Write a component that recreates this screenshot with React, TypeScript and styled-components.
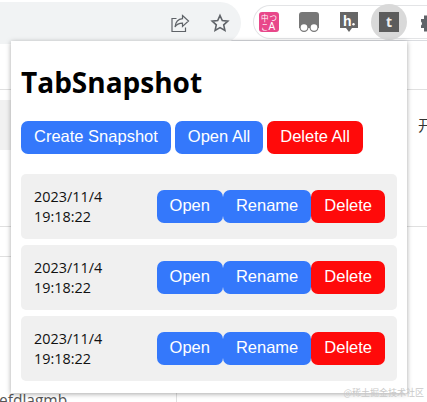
import React from 'react';
import styled, { createGlobalStyle } from 'styled-components';

const GlobalStyle = createGlobalStyle`
  html, body {
    margin: 0;
    padding: 0;
    background: #fff;
  }
  body {
    width: 427px;
    height: 402px;
    overflow: hidden;
    font-family: 'Liberation Sans', Arial, sans-serif;
  }
`;

const Window = styled.div`
  position: relative;
  width: 427px;
  height: 402px;
  overflow: hidden;
  background: #fff;
`;

const Toolbar = styled.div`
  display: flex;
  align-items: flex-start;
  height: 41px;
  padding-top: 2px;
  box-sizing: border-box;
  border-bottom: 1px solid #dadce0;
`;

const Omnibox = styled.div`
  position: relative;
  z-index: 1;
  display: flex;
  flex: none;
  align-items: center;
  justify-content: flex-end;
  gap: 20px;
  width: 241px;
  height: 42px;
  padding-right: 11px;
  box-sizing: border-box;
  background: #f1f3f4;
  border-radius: 0 21px 21px 0;
`;

const ExtensionPill = styled.div`
  display: flex;
  flex: 1;
  align-items: center;
  gap: 16px;
  min-width: 0;
  height: 34px;
  margin: 3px 0 0 12px;
  padding-left: 3px;
  box-sizing: border-box;
  border: 1px solid #e3e4e6;
  border-right: none;
  border-radius: 18px 0 0 18px;
`;

const ExtensionSlot = styled.div<{ $active?: boolean }>`
  display: flex;
  flex: none;
  align-items: center;
  justify-content: center;
  width: 24px;
  height: 24px;
  border-radius: 50%;
  ${({ $active }) => $active && 'background: #d9d9d9; box-shadow: 0 0 0 6px #d9d9d9;'}
`;

const PuzzleSlot = styled.div`
  display: flex;
  flex: none;
  align-items: center;
  width: 20px;
  height: 24px;
`;

const PageRule = styled.div<{ $top: number; $width?: number }>`
  position: absolute;
  left: 0;
  top: ${({ $top }) => $top}px;
  width: ${({ $width }) => ($width ? `${$width}px` : '100%')};
  height: 1px;
  background: #e0e0e0;
`;

const LeftBand = styled.div`
  position: absolute;
  left: 0;
  top: 100px;
  width: 11px;
  height: 50px;
  background: #f1f1f1;
`;

const BottomDivider = styled.div`
  position: absolute;
  left: 176px;
  top: 393px;
  width: 1px;
  height: 9px;
  background: #e0e0e0;
`;

const CutOffText = styled.div`
  position: absolute;
  left: -1px;
  top: 391px;
  color: #555;
  font-size: 15.5px;
  line-height: 18px;
  font-family: 'Open Sans', sans-serif;
`;

const SideText = styled.div`
  position: absolute;
  left: 418px;
  top: 115px;
  color: #333;
  font-size: 15px;
  line-height: 20px;
  font-family: 'Noto Sans CJK SC', sans-serif;
`;

const Watermark = styled.div`
  position: absolute;
  z-index: 3;
  right: 3px;
  bottom: 3px;
  color: #c9c9c9;
  font-size: 9px;
  line-height: 12px;
  font-family: 'Noto Sans CJK SC', sans-serif;
`;

const Popup = styled.div`
  position: absolute;
  z-index: 2;
  left: 11px;
  top: 41px;
  width: 396px;
  height: 352px;
  box-sizing: border-box;
  padding: 0 10px;
  background: #fff;
  box-shadow: 0 1px 5px rgba(0, 0, 0, 0.35);
`;

const Title = styled.h1`
  margin: 0;
  padding: 24px 0 21px;
  font-family: 'Open Sans', 'Noto Sans', sans-serif;
  font-size: 28px;
  line-height: 35px;
  font-weight: 700;
  color: #000;
`;

const Actions = styled.div`
  display: flex;
  gap: 4px;
  margin-bottom: 20px;
`;

const Button = styled.button<{ $danger?: boolean }>`
  height: 33px;
  margin: 0;
  padding: 0 13px 2px;
  border: none;
  border-radius: 7px;
  background: ${({ $danger }) => ($danger ? '#ff0a0a' : '#3478fb')};
  color: #fff;
  font-family: 'Liberation Sans', Arial, sans-serif;
  font-size: 16.5px;
  white-space: nowrap;
`;

const SnapshotList = styled.div`
  display: flex;
  flex-direction: column;
  gap: 6px;
`;

const SnapshotRow = styled.div`
  display: flex;
  align-items: center;
  justify-content: space-between;
  height: 65px;
  padding: 0 12px 0 13px;
  border-radius: 5px;
  background: #f0f0f0;
`;

const Timestamp = styled.div`
  width: 80px;
  font-family: 'Open Sans', 'Noto Sans', sans-serif;
  font-size: 14.4px;
  line-height: 20px;
  color: #111;
`;

const RowActions = styled.div`
  display: flex;
`;

const ShareIcon = () => (
  <svg width="20" height="20" viewBox="0 0 20 20" fill="none" stroke="#5f6368" strokeWidth="1.2">
    <path d="M6.500 5.500H2v13h13.500v-4" />
    <path d="M12.500 2.500l6 5.500-6 5.500v-3.300c-3.500 0-6 1.300-7.500 3.800.5-4.500 3-7.800 7.500-8.300z" />
  </svg>
);

const StarIcon = () => (
  <svg width="20" height="20" viewBox="0 0 20 20" fill="none" stroke="#5f6368" strokeWidth="1.6">
    <path d="M10 2.500l2.300 5.100 5.500.6-4.100 3.700 1.200 5.500L10 14.600l-4.900 2.800 1.200-5.500-4.100-3.700 5.500-.6z" />
  </svg>
);

const TranslateIcon = () => (
  <svg width="20" height="20" viewBox="0 0 20 20">
    <rect width="20" height="20" rx="3" fill="#e8488a" />
    <text x="2" y="9" fontSize="7.500" fill="#fff" fontFamily="'Noto Sans CJK SC', sans-serif">中</text>
    <text x="10.500" y="9" fontSize="7.500" fill="#fff" fontFamily="'Noto Sans CJK SC', sans-serif">つ</text>
    <text x="2" y="18" fontSize="7.500" fill="#fff" fontFamily="'Noto Sans CJK SC', sans-serif">こ</text>
    <text x="9.500" y="18" fontSize="10" fill="#fff" fontFamily="'Liberation Sans', sans-serif">A</text>
  </svg>
);

const TamperIcon = () => (
  <svg width="20" height="20" viewBox="0 0 20 20">
    <path d="M3 0h14a3 3 0 0 1 3 3v13H0V3a3 3 0 0 1 3-3z" fill="#777" />
    <circle cx="5" cy="15.500" r="4.500" fill="#777" />
    <circle cx="15" cy="15.500" r="4.500" fill="#777" />
    <circle cx="5" cy="15.500" r="3.300" fill="#fff" />
    <circle cx="15" cy="15.500" r="3.300" fill="#fff" />
  </svg>
);

const HypothesisIcon = () => (
  <svg width="18" height="21" viewBox="0 0 18 21">
    <path d="M0 0h18v16h-6l-3 4-3-4H0z" fill="#666" />
    <text x="3" y="13.500" fontSize="14" fontWeight="700" fill="#fff" fontFamily="'Liberation Sans', sans-serif">h</text>
    <circle cx="13.500" cy="12.300" r="1.200" fill="#fff" />
  </svg>
);

const SnapshotIcon = () => (
  <svg width="20" height="20" viewBox="0 0 20 20">
    <rect width="20" height="20" fill="#5c5c5c" />
    <text x="10" y="15" textAnchor="middle" fontSize="14" fontWeight="700" fill="#eee" fontFamily="'Open Sans', sans-serif">t</text>
  </svg>
);

const PuzzleIcon = () => (
  <svg width="20" height="20" viewBox="0 0 20 20" fill="#5f6368">
    <path d="M4 7h3V3.500h5V7h8v9h-8v3.500H7V16H4v-2.500a2.500 2.500 0 0 0 0-4z" />
  </svg>
);

const snapshots = [1, 2, 3];

export default function App(): JSX.Element {
  return (
    <Window>
      <GlobalStyle />
      <Toolbar>
        <Omnibox>
          <ShareIcon />
          <StarIcon />
        </Omnibox>
        <ExtensionPill>
          <ExtensionSlot><TranslateIcon /></ExtensionSlot>
          <ExtensionSlot><TamperIcon /></ExtensionSlot>
          <ExtensionSlot><HypothesisIcon /></ExtensionSlot>
          <ExtensionSlot $active><SnapshotIcon /></ExtensionSlot>
          <PuzzleSlot><PuzzleIcon /></PuzzleSlot>
        </ExtensionPill>
      </Toolbar>
      <PageRule $top={89} />
      <PageRule $top={226} />
      <PageRule $top={256} $width={11} />
      <LeftBand />
      <BottomDivider />
      <SideText>开</SideText>
      <CutOffText>efdlagmb</CutOffText>
      <Popup>
        <Title>TabSnapshot</Title>
        <Actions>
          <Button>Create Snapshot</Button>
          <Button>Open All</Button>
          <Button $danger>Delete All</Button>
        </Actions>
        <SnapshotList>
          {snapshots.map((id) => (
            <SnapshotRow key={id}>
              <Timestamp>2023/11/4 19:18:22</Timestamp>
              <RowActions>
                <Button>Open</Button>
                <Button>Rename</Button>
                <Button $danger>Delete</Button>
              </RowActions>
            </SnapshotRow>
          ))}
        </SnapshotList>
      </Popup>
      <Watermark>@稀土掘金技术社区</Watermark>
    </Window>
  );
}
